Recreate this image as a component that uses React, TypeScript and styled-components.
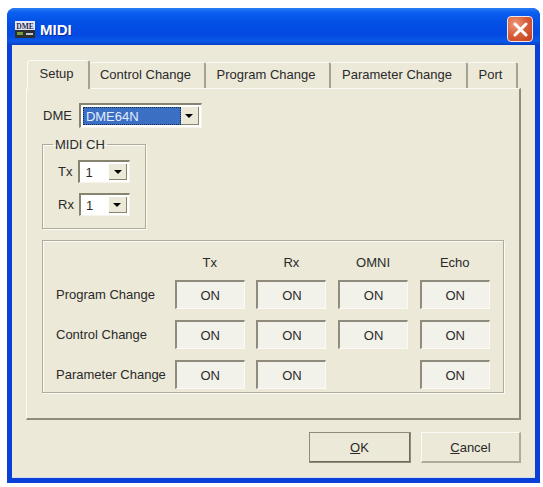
import React from 'react';
import styled, { createGlobalStyle } from 'styled-components';

const GlobalStyle = createGlobalStyle`
  html, body {
    margin: 0;
    padding: 0;
    background: #fff;
    font-family: "Liberation Sans", Arial, sans-serif;
  }
`;

const Page = styled.div`
  width: 543px;
  height: 487px;
  padding: 8px 3px 4px 7px;
  box-sizing: border-box;
  overflow: hidden;
`;

const Window = styled.div`
  height: 475px;
  display: flex;
  flex-direction: column;
  border-radius: 8px 8px 0 0;
  background: #0a3fd8;
  overflow: hidden;
`;

const TitleBar = styled.div`
  height: 37px;
  flex: none;
  display: flex;
  align-items: center;
  padding: 5px 7px 0 8px;
  box-sizing: border-box;
  gap: 5px;
  background: linear-gradient(180deg, #2a7df2 0%, #0b5ff0 12%, #0452e6 35%, #0349e2 70%, #0a58e8 90%, #0a3fc4 100%);
`;

const TitleText = styled.span`
  flex: 1;
  color: #fff;
  font-size: 15px;
  font-weight: bold;
  text-shadow: 1px 1px 0 #0a2a9a;
`;

const CloseButton = styled.button`
  width: 26px;
  height: 26px;
  padding: 0;
  display: flex;
  align-items: center;
  justify-content: center;
  border: 1px solid #f4e6e0;
  border-radius: 4px;
  background: radial-gradient(circle at 30% 30%, #ee9a7c 0%, #d9603c 45%, #c23c1c 100%);
`;

const Body = styled.div`
  flex: 1;
  margin: 0 5px 5px 5px;
  padding: 15px 14px 0 14px;
  background: #ece9d8;
  border-bottom: 1px solid #d0dff0;
`;

const TabStrip = styled.div`
  display: flex;
  height: 28px;
  padding-left: 1px;
  align-items: flex-end;
`;

const Tab = styled.div<{ $width: number; $active?: boolean }>`
  width: ${(p) => p.$width}px;
  height: ${(p) => (p.$active ? 29 : 26)}px;
  margin-bottom: ${(p) => (p.$active ? -1 : 0)}px;
  box-sizing: border-box;
  display: flex;
  align-items: center;
  justify-content: center;
  padding-bottom: ${(p) => (p.$active ? 3 : 2)}px;
  padding-right: 3px;
  font-size: 13px;
  color: #2a2a2a;
  background: #ece9d8;
  position: relative;
  border-right: 2px solid #a5a292;
  border-top: 1px solid #fbfaf4;
  border-left: ${(p) => (p.$active ? '1px solid #fbfaf4' : '0')};
  border-radius: 3px 3px 0 0;
`;

const Panel = styled.div`
  height: 332px;
  box-sizing: border-box;
  padding: 14px 16px 0 15px;
  border-top: 1px solid #fbfaf4;
  border-left: 1px solid #fbfaf4;
  border-right: 2px solid #8f8c7e;
  border-bottom: 2px solid #8f8c7e;
`;

const FieldRow = styled.div<{ $gap: number }>`
  display: flex;
  align-items: center;
  gap: ${(p) => p.$gap}px;
  font-size: 13px;
  color: #2a2a2a;
`;

const DeviceRow = styled(FieldRow)`
  padding-left: 1px;
`;

const Combo = styled.div<{ $width: number; $height: number; $selected?: boolean }>`
  width: ${(p) => p.$width}px;
  height: ${(p) => p.$height}px;
  box-sizing: border-box;
  display: flex;
  align-items: stretch;
  padding: 2px;
  background: #fff;
  border-top: 2px solid #86836f;
  border-left: 2px solid #86836f;
  border-right: 1px solid #f5f3ea;
  border-bottom: 1px solid #f5f3ea;
  font-size: 13px;
  color: ${(p) => (p.$selected ? '#e4ecfa' : '#2a2a2a')};
`;

const ComboValue = styled.span<{ $selected?: boolean }>`
  flex: 1;
  display: flex;
  align-items: center;
  padding-left: 3px;
  background: ${(p) => (p.$selected ? '#3a6fc4' : 'transparent')};
  outline: ${(p) => (p.$selected ? '1px dotted #1e2a44' : 'none')};
  outline-offset: -1px;
`;

const ComboArrow = styled.span`
  width: 18px;
  flex: none;
  display: flex;
  align-items: center;
  justify-content: center;
  background: #ece9d8;
  border-right: 1px solid #86836f;
  border-bottom: 1px solid #86836f;
  box-sizing: border-box;
`;

const Arrow = styled.span`
  width: 0;
  height: 0;
  border-left: 4px solid transparent;
  border-right: 4px solid transparent;
  border-top: 4px solid #000;
`;

const ChannelGroup = styled.fieldset`
  width: 104px;
  height: 92px;
  box-sizing: border-box;
  margin: 9px 0 0;
  padding: 0 0 0 15px;
  border: 1px solid #aeab9c;
  box-shadow: 1px 1px 0 #fbfaf4, inset 1px 1px 0 #fbfaf4;
`;

const GroupLegend = styled.legend`
  margin-left: -5px;
  padding: 0 2px;
  font-size: 13px;
  line-height: 15px;
  color: #2a2a2a;
`;

const ChannelStack = styled.div`
  display: flex;
  flex-direction: column;
  gap: 10px;
  margin-top: 8px;
`;

const MatrixGroup = styled.div`
  width: 462px;
  height: 153px;
  box-sizing: border-box;
  margin-top: 11px;
  padding: 12px 0 0 13px;
  display: grid;
  grid-template-columns: 107px repeat(4, 70px);
  grid-template-rows: 16px repeat(3, 29px);
  column-gap: 11.7px;
  row-gap: 11px;
  align-items: center;
  font-size: 13px;
  color: #2a2a2a;
  border: 1px solid #aeab9c;
  box-shadow: 1px 1px 0 #fbfaf4, inset 1px 1px 0 #fbfaf4;
`;

const ColumnHead = styled.span`
  text-align: center;
  padding-top: 2px;
`;

const RowLabel = styled.span`
  white-space: nowrap;
`;

const Indicator = styled.div`
  height: 29px;
  box-sizing: border-box;
  display: flex;
  align-items: center;
  justify-content: center;
  background: #f3f2ea;
  border-top: 2px solid #8f8c7e;
  border-left: 2px solid #8f8c7e;
  border-right: 1px solid #fbfaf4;
  border-bottom: 1px solid #fbfaf4;
`;

const Footer = styled.div`
  display: flex;
  justify-content: flex-end;
  gap: 10px;
  margin-top: 12px;
`;

const DialogButton = styled.button<{ $primary?: boolean }>`
  width: ${(p) => (p.$primary ? 102 : 100)}px;
  height: 31px;
  padding: 0;
  font-family: inherit;
  font-size: 13px;
  color: #2a2a2a;
  background: #ece9d8;
  border-top: 1px solid #fbfaf4;
  border-left: 1px solid #fbfaf4;
  border-right: 2px solid ${(p) => (p.$primary ? '#6e6b5c' : '#aeab9c')};
  border-bottom: 2px solid ${(p) => (p.$primary ? '#6e6b5c' : '#aeab9c')};
  outline: ${(p) => (p.$primary ? '1px solid #8f8c7e' : 'none')};
  outline-offset: -1px;
`;

const Key = styled.span`
  text-decoration: underline;
`;

const AppIcon = () => (
  <svg width="20" height="17" viewBox="0 0 20 17">
    <rect width="20" height="9" fill="#e8e8ee" />
    <text x="10" y="7.5" textAnchor="middle" fontSize="7.5" fontWeight="bold" fontFamily="Liberation Serif, serif" fill="#1a2a5a">
      DME
    </text>
    <rect y="9" width="20" height="8" fill="#2c2f30" />
    <rect x="2" y="11" width="6" height="3" fill="#7a9a3a" />
    <rect x="11" y="12" width="7" height="2" fill="#c8c8c8" />
  </svg>
);

const tabs = [
  { label: 'Setup', width: 63, active: true },
  { label: 'Control Change', width: 116 },
  { label: 'Program Change', width: 125 },
  { label: 'Parameter Change', width: 137 },
  { label: 'Port', width: 50 },
];

const columns = ['Tx', 'Rx', 'OMNI', 'Echo'];

const rows = [
  { label: 'Program Change', cells: [true, true, true, true] },
  { label: 'Control Change', cells: [true, true, true, true] },
  { label: 'Parameter Change', cells: [true, true, false, true] },
];

const App: React.FC = () => {
  return (
    <Page>
      <GlobalStyle />
      <Window>
        <TitleBar>
          <AppIcon />
          <TitleText>MIDI</TitleText>
          <CloseButton aria-label="Close">
            <svg width="15" height="15" viewBox="0 0 15 15">
              <path d="M2 2 L13 13 M13 2 L2 13" stroke="#fff" strokeWidth="3" strokeLinecap="round" />
            </svg>
          </CloseButton>
        </TitleBar>
        <Body>
          <TabStrip>
            {tabs.map((t) => (
              <Tab key={t.label} $width={t.width} $active={t.active}>
                {t.label}
              </Tab>
            ))}
          </TabStrip>
          <Panel>
            <DeviceRow $gap={7}>
              <span>DME</span>
              <Combo $width={123} $height={25} $selected>
                <ComboValue $selected>DME64N</ComboValue>
                <ComboArrow>
                  <Arrow />
                </ComboArrow>
              </Combo>
            </DeviceRow>
            <ChannelGroup>
              <GroupLegend>MIDI CH</GroupLegend>
              <ChannelStack>
                <FieldRow $gap={6}>
                  <span>Tx</span>
                  <Combo $width={52} $height={23}>
                    <ComboValue>1</ComboValue>
                    <ComboArrow>
                      <Arrow />
                    </ComboArrow>
                  </Combo>
                </FieldRow>
                <FieldRow $gap={5}>
                  <span>Rx</span>
                  <Combo $width={51} $height={23}>
                    <ComboValue>1</ComboValue>
                    <ComboArrow>
                      <Arrow />
                    </ComboArrow>
                  </Combo>
                </FieldRow>
              </ChannelStack>
            </ChannelGroup>
            <MatrixGroup>
              <span />
              {columns.map((c) => (
                <ColumnHead key={c}>{c}</ColumnHead>
              ))}
              {rows.map((r) => (
                <React.Fragment key={r.label}>
                  <RowLabel>{r.label}</RowLabel>
                  {r.cells.map((on, i) => (on ? <Indicator key={i}>ON</Indicator> : <span key={i} />))}
                </React.Fragment>
              ))}
            </MatrixGroup>
          </Panel>
          <Footer>
            <DialogButton $primary>
              <Key>O</Key>K
            </DialogButton>
            <DialogButton>
              <Key>C</Key>ancel
            </DialogButton>
          </Footer>
        </Body>
      </Window>
    </Page>
  );
};

export default App;
